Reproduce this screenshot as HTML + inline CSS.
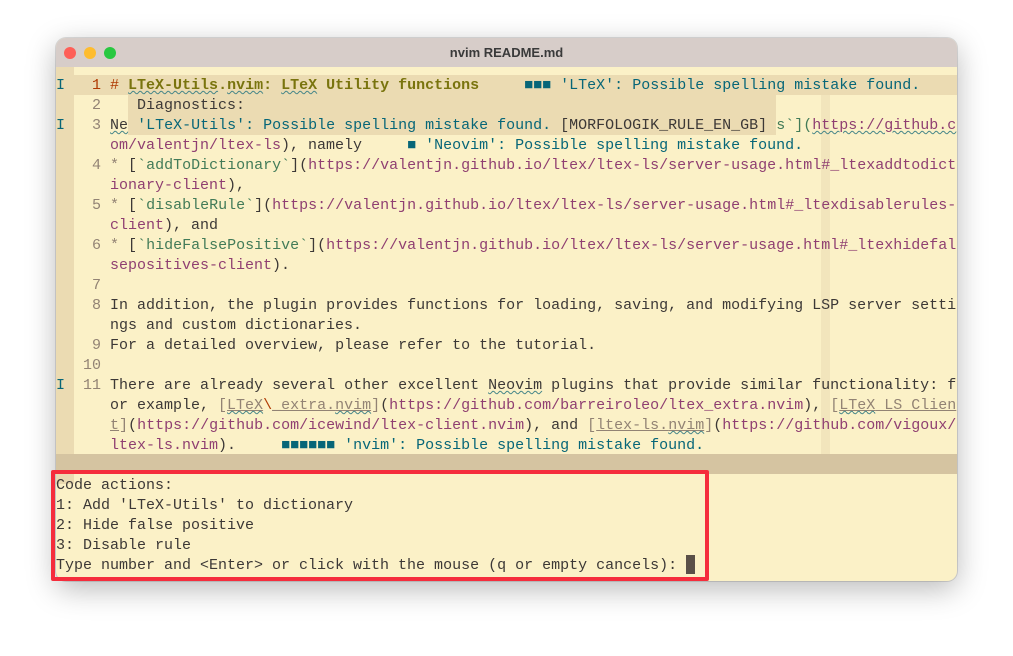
<!DOCTYPE html>
<html><head><style>
body{margin:0;width:1013px;height:656px;background:#fff;position:relative;overflow:hidden;font-family:"Liberation Mono",monospace;}
.win{position:absolute;left:56px;top:38px;width:901px;height:543px;border-radius:10px;overflow:hidden;background:#fbf1c7;box-shadow:0 8px 30px rgba(0,0,0,.28),0 0 0 1px rgba(0,0,0,.12);}
.title{position:absolute;left:0;top:0;width:901px;height:29px;background:#d7cdc9;font:bold 13px "Liberation Sans",sans-serif;color:#3a3a3a;text-align:center;line-height:29px;}
.dot{position:absolute;top:9px;width:12px;height:12px;border-radius:50%;}
.r{position:absolute;left:0;height:20px;line-height:22px;font-size:15px;white-space:pre;color:#3c3836;}
.sign{position:absolute;left:0;top:29px;width:18px;height:417px;background:#ebdbb2;}
.n{color:#928374}.u{color:#8f3f71}.g{color:#427b58}.d{color:#076678}.h{color:#79740e;font-weight:bold}.o{color:#af3a03}
.sq{text-decoration:underline wavy #458588;text-decoration-thickness:1px}
.cc{position:absolute;left:765px;top:57px;width:9px;height:360px;background:#f2e5bc;}
</style></head><body>
<div class="win">
<div class="title">nvim README.md
<div class="dot" style="left:8px;background:#fe5f57"></div>
<div class="dot" style="left:28px;background:#febc2e"></div>
<div class="dot" style="left:48px;background:#28c840"></div>
</div>
<div class="sign"></div>
<div class="cc"></div>
<div style="position:absolute;left:0;top:37px;width:901px;height:20px;background:#ebdbb2"></div>
<div style="position:absolute;left:72px;top:57px;width:648px;height:40px;background:#ebdbb2"></div>
<div class="r" style="top:37px"><span class="d">I</span> <span class="o">  1 # </span><span class="h"><span class="sq">LTeX-Utils</span>.<span class="sq">nvim</span>: <span class="sq">LTeX</span> Utility functions</span>     <span class="d">■■■ 'LTeX': Possible spelling mistake found.</span></div>
<div class="r" style="top:57px">  <span class="n">  2 </span>   Diagnostics:</div>
<div class="r" style="top:77px"><span class="d">I</span> <span class="n">  3 </span><span class="sq">Ne</span><span class="d"> 'LTeX-Utils': Possible spelling mistake found. </span>[MORFOLOGIK_RULE_EN_GB]<span class="g"> s`](</span><span class="u sq">https://github.c</span></div>
<div class="r" style="top:97px">      <span class="u">om/valentjn/ltex-ls</span>), namely     <span class="d">■ 'Neovim': Possible spelling mistake found.</span></div>
<div class="r" style="top:117px">  <span class="n">  4 </span><span class="n">*</span> [<span class="g">`addToDictionary`</span>](<span class="u">https://valentjn.github.io/ltex/ltex-ls/server-usage.html#_ltexaddtodict</span></div>
<div class="r" style="top:137px">      <span class="u">ionary-client</span>),</div>
<div class="r" style="top:157px">  <span class="n">  5 </span><span class="n">*</span> [<span class="g">`disableRule`</span>](<span class="u">https://valentjn.github.io/ltex/ltex-ls/server-usage.html#_ltexdisablerules-</span></div>
<div class="r" style="top:177px">      <span class="u">client</span>), and</div>
<div class="r" style="top:197px">  <span class="n">  6 </span><span class="n">*</span> [<span class="g">`hideFalsePositive`</span>](<span class="u">https://valentjn.github.io/ltex/ltex-ls/server-usage.html#_ltexhidefal</span></div>
<div class="r" style="top:217px">      <span class="u">sepositives-client</span>).</div>
<div class="r" style="top:237px">  <span class="n">  7 </span></div>
<div class="r" style="top:257px">  <span class="n">  8 </span>In addition, the plugin provides functions for loading, saving, and modifying LSP server setti</div>
<div class="r" style="top:277px">      ngs and custom dictionaries.</div>
<div class="r" style="top:297px">  <span class="n">  9 </span>For a detailed overview, please refer to the tutorial.</div>
<div class="r" style="top:317px">  <span class="n"> 10 </span></div>
<div class="r" style="top:337px"><span class="d">I</span> <span class="n"> 11 </span>There are already several other excellent <span class="sq">Neovim</span> plugins that provide similar functionality: f</div>
<div class="r" style="top:357px">      or example, <span class="n">[</span><span class="n" style="text-decoration:underline"><span class="sq">LTeX</span></span><span class="o">\</span><span class="n" style="text-decoration:underline">_extra.<span class="sq">nvim</span></span><span class="n">]</span>(<span class="u">https://github.com/barreiroleo/ltex_extra.nvim</span>), <span class="n">[</span><span class="n" style="text-decoration:underline"><span class="sq">LTeX</span> LS Clien</span></div>
<div class="r" style="top:377px">      <span class="n" style="text-decoration:underline">t</span><span class="n">]</span>(<span class="u">https://github.com/icewind/ltex-client.nvim</span>), and <span class="n">[</span><span class="n" style="text-decoration:underline">ltex-ls.<span class="sq">nvim</span></span><span class="n">]</span>(<span class="u">https://github.com/vigoux/</span></div>
<div class="r" style="top:397px">      <span class="u">ltex-ls.nvim</span>).     <span class="d">■■■■■■ 'nvim': Possible spelling mistake found.</span></div>
<div style="position:absolute;left:0;top:416px;width:901px;height:20px;background:#d5c4a1"></div>
<div class="r" style="top:437px">Code actions:</div>
<div class="r" style="top:457px">1: Add 'LTeX-Utils' to dictionary</div>
<div class="r" style="top:477px">2: Hide false positive</div>
<div class="r" style="top:497px">3: Disable rule</div>
<div class="r" style="top:517px">Type number and &lt;Enter&gt; or click with the mouse (q or empty cancels): </div>
<div style="position:absolute;left:630px;top:517px;width:9px;height:19px;background:#5a5048"></div>
</div>
<div style="position:absolute;left:51px;top:470px;width:650px;height:103px;border:4px solid #f52d3c;border-radius:2px"></div>
</body></html>
